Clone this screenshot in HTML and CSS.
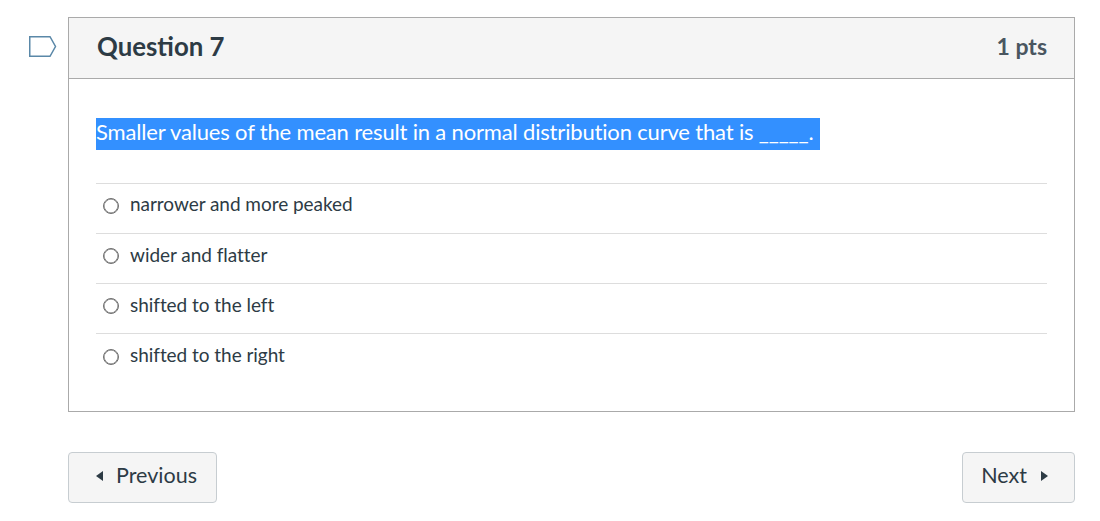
FILE: index.html
```html
<!DOCTYPE html>
<html lang="en">
<head>
    <meta charset="UTF-8">
    <meta name="viewport" content="width=device-width, initial-scale=1.0">
    <title>Question 7</title>
    <link rel="stylesheet" href="styles.css">
</head>
<body>
    <div class="quiz">
        <div class="flag">
            <svg width="28" height="22" viewBox="0 0 28 22">
                <path d="M0.75 1.75H21L26.5 11.5L21 21.25H0.75Z" fill="none" stroke="#5a88a8" stroke-width="1.5"/>
            </svg>
        </div>
        <div class="main">
            <div class="question">
                <div class="question-header">
                    <h2>Question 7</h2>
                    <span class="points">1 pts</span>
                </div>
                <div class="question-body">
                    <p class="question-text"><span class="selected">Smaller values of the mean result in a normal distribution curve that is _____.</span></p>
                    <ul class="answers">
                        <li><span class="radio"></span>narrower and more peaked</li>
                        <li><span class="radio"></span>wider and flatter</li>
                        <li><span class="radio"></span>shifted to the left</li>
                        <li><span class="radio"></span>shifted to the right</li>
                    </ul>
                </div>
            </div>
            <div class="nav">
                <button type="button" class="prev"><span class="arrow arrow-left"></span>Previous</button>
                <button type="button" class="next">Next<span class="arrow arrow-right"></span></button>
            </div>
        </div>
    </div>
</body>
</html>
```

FILE: styles.css
```css
body {
    font-family: Lato, "Open Sans", sans-serif;
    color: #2d3b45;
    background-color: white;
    margin: 0;
    padding: 0;
}
.quiz {
    display: flex;
    padding: 17px 25px 0 0;
}
.flag {
    width: 68px;
    flex-shrink: 0;
    padding: 18px 0 0 29px;
    box-sizing: border-box;
}
.flag svg {
    display: block;
}
.main {
    flex: 1;
}
.question {
    border: 1px solid #aaaaaa;
}
.question-header {
    display: flex;
    justify-content: space-between;
    align-items: center;
    box-sizing: border-box;
    height: 61px;
    padding: 0 27px 5px 28px;
    background-color: #f5f5f5;
    border-bottom: 1px solid #aaaaaa;
}
.question-header h2 {
    margin: 0;
    font-size: 25.8px;
    font-weight: 700;
}
.points {
    font-size: 23px;
    font-weight: 700;
    color: #4a5660;
}
.question-body {
    padding: 39px 27px 27.4px;
}
.question-text {
    margin: 0 0 33px;
    font-size: 22px;
    line-height: 28px;
    letter-spacing: -0.17px;
}
.selected {
    display: inline-block;
    padding: 0 7px 4px 0;
    background-color: #3390ff;
    color: white;
}
.answers {
    list-style: none;
    margin: 0;
    padding: 0;
}
.answers li {
    display: flex;
    align-items: flex-start;
    box-sizing: border-box;
    height: 50.15px;
    padding: 6.4px 0 0 7px;
    border-top: 1px solid #dddddd;
    font-size: 19px;
    line-height: 28px;
    letter-spacing: -0.04px;
}
.radio {
    box-sizing: border-box;
    width: 16px;
    height: 16px;
    margin: 7.7px 11px 0 0;
    border: 1px solid #6e6e6e;
    border-radius: 50%;
    box-shadow: inset 0 0 0 0.5px #6e6e6e;
}
.nav {
    display: flex;
    justify-content: space-between;
    margin-top: 40px;
}
.nav button {
    display: flex;
    align-items: center;
    box-sizing: border-box;
    height: 51px;
    padding-top: 0;
    padding-bottom: 5px;
    background-color: #f5f5f5;
    border: 1px solid #c7cdd1;
    border-radius: 4px;
    color: #2d3b45;
    font-family: inherit;
    font-size: 21.5px;
}
.prev {
    padding-left: 27px;
    padding-right: 19px;
}
.next {
    padding-left: 18.5px;
    padding-right: 26px;
}
.arrow {
    width: 0;
    height: 0;
    margin-top: 2px;
    border-top: 5px solid transparent;
    border-bottom: 5px solid transparent;
}
.arrow-left {
    margin-right: 13px;
    border-right: 7px solid #2d3b45;
}
.arrow-right {
    margin-left: 14px;
    border-left: 7px solid #2d3b45;
}
```
